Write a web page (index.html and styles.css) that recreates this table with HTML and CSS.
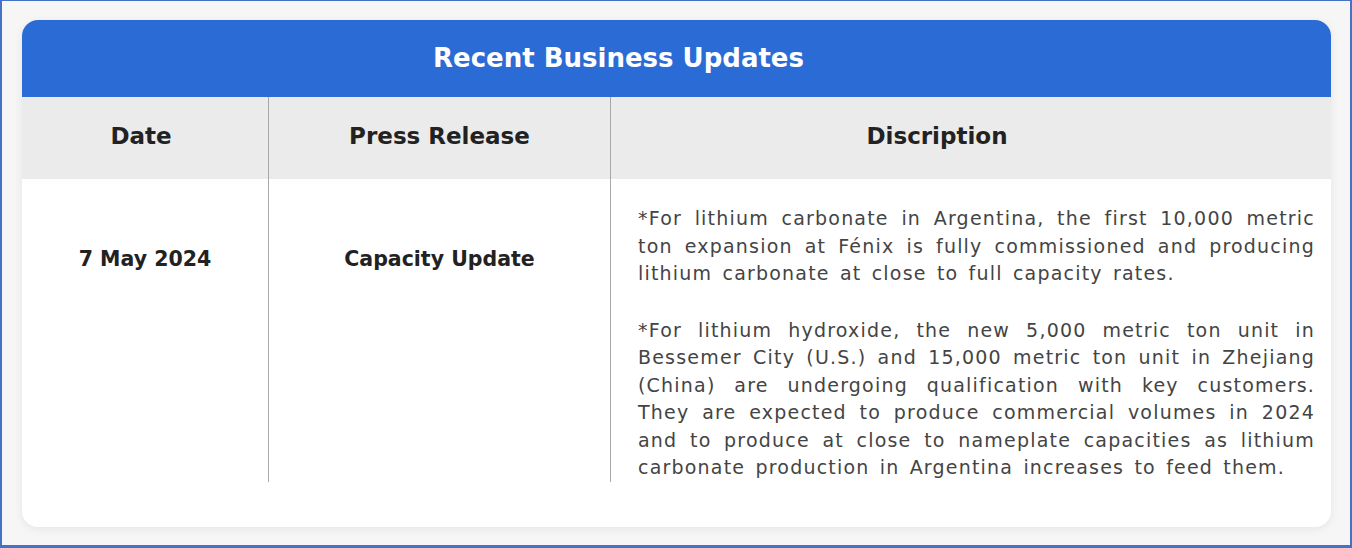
FILE: index.html
```html
<!DOCTYPE html>
<html>
<head>
<meta charset="utf-8">
<link rel="stylesheet" href="styles.css">
</head>
<body>
<div class="frame">
  <div class="card">
    <div class="title">Recent Business Updates</div>
    <div class="table">
      <div class="th">Date</div>
      <div class="th">Press Release</div>
      <div class="th th-desc">Discription</div>
      <div class="td strong">7 May 2024</div>
      <div class="td strong">Capacity Update</div>
      <div class="td desc">
        <p>*For lithium carbonate in Argentina, the first 10,000 metric ton expansion at Fénix is fully commissioned and producing lithium carbonate at close to full capacity rates.</p>
        <p>*For lithium hydroxide, the new 5,000 metric ton unit in Bessemer City (U.S.) and 15,000 metric ton unit in Zhejiang (China) are undergoing qualification with key customers. They are expected to produce commercial volumes in 2024 and to produce at close to nameplate capacities as lithium carbonate production in Argentina increases to feed them.</p>
      </div>
    </div>
  </div>
</div>
</body>
</html>
```
FILE: styles.css
```css
* { box-sizing: border-box; }
html, body { margin: 0; padding: 0; }
body { width: 1352px; height: 548px; overflow: hidden; font-family: "DejaVu Sans", "Open Sans", sans-serif; }
.frame {
  width: 1352px; height: 548px;
  border-style: solid; border-color: #4472c4;
  border-width: 1px 2px 3px 2px;
  background: #f6f6f6;
  padding: 19px 19px 0 20px;
}
.card {
  width: 1309px; height: 507px;
  background: #fff;
  border-radius: 16px;
  box-shadow: 0 2px 10px rgba(0,0,0,0.07);
  overflow: hidden;
}
.title {
  height: 77px;
  background: #2b6bd5;
  color: #fff;
  font-weight: 700;
  font-size: 26px;
  display: flex; align-items: center; justify-content: center;
  padding-right: 116px;
  padding-bottom: 2px;
}
.table {
  display: grid;
  grid-template-columns: 246px 342px 721px;
  grid-template-rows: 82px 303px;
}
.th {
  background: #ebebeb;
  color: #222;
  font-weight: 700;
  font-size: 23px;
  display: flex; align-items: center; justify-content: center;
  padding-bottom: 4px;
}
.th:first-child { padding-right: 8px; }
.th-desc { padding-right: 68px; }
.th + .th, .td + .td { border-left: 1px solid #a8a8a8; }
.td { color: #222; }
.strong {
  font-weight: 700; font-size: 20.5px;
  display: flex; align-items: flex-start; justify-content: center;
  padding-top: 66px;
  line-height: 28px;
}
.desc {
  padding: 26px 16px 0 27px;
  font-size: 19px;
  line-height: 27.5px;
  color: #444;
  text-align: justify;
  letter-spacing: 1.2px;
  word-spacing: 3px;
}
.desc p { margin: 0 0 29px; }
```
